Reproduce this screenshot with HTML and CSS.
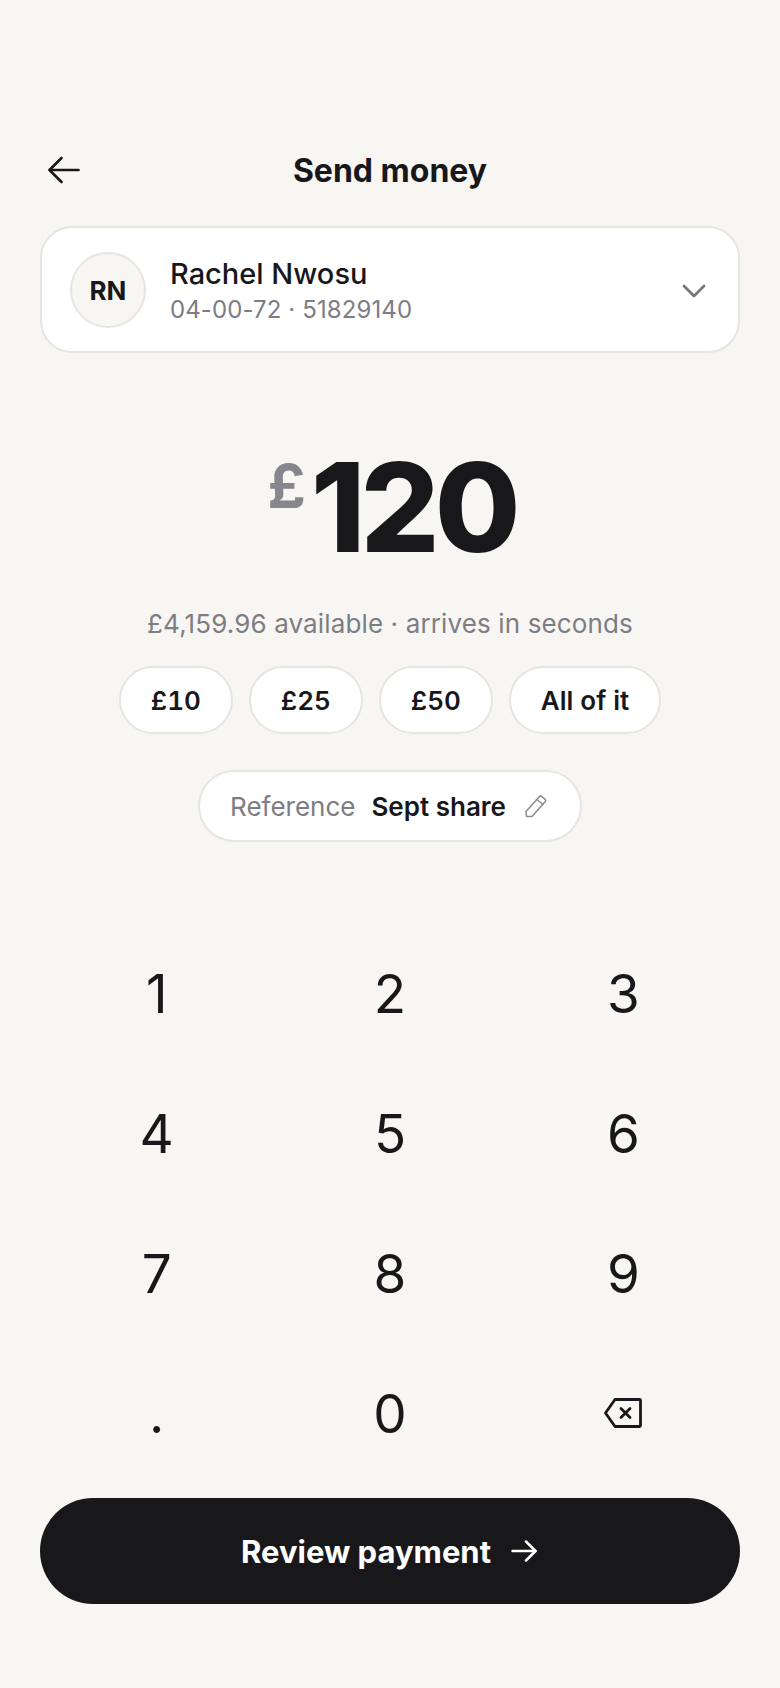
FILE: index.html
```html
<!DOCTYPE html>
<html lang="en">

<head>
    <meta charset="UTF-8">
    <meta name="viewport" content="width=device-width, initial-scale=1.0">
    <title>Send money</title>
    <link rel="stylesheet" href="styles.css">
</head>

<body>
    <div class="screen">
        <div class="header">
            <svg class="back" width="32" height="28" viewBox="0 0 32 28" fill="none" stroke="#18181b" stroke-width="2.6" stroke-linecap="round" stroke-linejoin="round">
                <path d="M30.5 14H2"/>
                <path d="M13.5 2L1.5 14l12 12"/>
            </svg>
            <div class="title">Send money</div>
        </div>

        <div class="payee">
            <div class="avatar">RN</div>
            <div class="payee-text">
                <div class="payee-name">Rachel Nwosu</div>
                <div class="payee-acc">04-00-72 · 51829140</div>
            </div>
            <svg class="chev" width="24" height="14" viewBox="0 0 24 14" fill="none" stroke="#77777c" stroke-width="2.8" stroke-linecap="round" stroke-linejoin="round">
                <path d="M2 2l10 10L22 2"/>
            </svg>
        </div>

        <div class="amount">
            <span class="currency">£</span><span class="value">120</span>
        </div>
        <div class="note">£4,159.96 available · arrives in seconds</div>

        <div class="chips">
            <div class="chip">£10</div>
            <div class="chip">£25</div>
            <div class="chip">£50</div>
            <div class="chip">All of it</div>
        </div>

        <div class="ref-row">
            <div class="ref">
                <span class="ref-label">Reference</span>
                <span class="ref-value">Sept share</span>
                <svg width="24" height="24" viewBox="0 0 24 24" fill="none" stroke="#8e8e93" stroke-width="1.6" stroke-linejoin="round">
                    <path d="M2 17.5L15.5 2.5a1.6 1.6 0 0 1 2.2-.1l3.5 3a1.6 1.6 0 0 1 .1 2.2L8 22.5H2.5z"/>
                    <path d="M13 5.5l6.5 5.5"/>
                </svg>
            </div>
        </div>

        <div class="keypad">
            <div class="key">1</div>
            <div class="key">2</div>
            <div class="key">3</div>
            <div class="key">4</div>
            <div class="key">5</div>
            <div class="key">6</div>
            <div class="key">7</div>
            <div class="key">8</div>
            <div class="key">9</div>
            <div class="key">.</div>
            <div class="key">0</div>
            <div class="key">
                <svg class="del" width="38" height="30" viewBox="0 0 38 30" fill="none" stroke="#18181b" stroke-width="2.8" stroke-linecap="round" stroke-linejoin="round">
                    <path d="M11 1.5h24.500a1 1 0 0 1 1 1v25a1 1 0 0 1-1 1H11L1.500 15z"/>
                    <path d="M17 10.500l9 9M26 10.500l-9 9"/>
                </svg>
            </div>
        </div>

        <div class="cta">
            <span>Review payment</span>
            <svg width="26" height="22" viewBox="0 0 26 22" fill="none" stroke="#fff" stroke-width="2.5" stroke-linecap="round" stroke-linejoin="round">
                <path d="M1.5 11h23"/>
                <path d="M15 1.5L24.5 11 15 20.5"/>
            </svg>
        </div>
    </div>
</body>

</html>
```

FILE: styles.css
```css
* {
    margin: 0;
    padding: 0;
    box-sizing: border-box;
}

body {
    background-color: #f7f6f3;
    color: #18181b;
    font-family: Inter, "Liberation Sans", sans-serif;
}

.screen {
    width: 780px;
    height: 1688px;
    padding: 150px 40px 0;
    display: flex;
    flex-direction: column;
}

.header {
    height: 40px;
    display: flex;
    align-items: center;
    justify-content: center;
    position: relative;
}

.back {
    position: absolute;
    left: 8px;
    top: 6px;
}

.title {
    font-size: 32px;
    font-weight: 700;
}

.payee {
    margin-top: 36px;
    height: 127px;
    background-color: #fff;
    border: 2px solid #e6e5e1;
    border-radius: 32px;
    padding: 0 32px 0 28px;
    display: flex;
    align-items: center;
}

.avatar {
    width: 76px;
    height: 76px;
    border-radius: 50%;
    background-color: #f7f6f3;
    border: 2px solid #e6e5e1;
    padding-top: 2px;
    font-size: 26px;
    font-weight: 700;
    display: flex;
    align-items: center;
    justify-content: center;
}

.payee-text {
    margin-left: 24px;
    padding-top: 2px;
    flex: 1;
}

.payee-name {
    font-size: 29px;
    font-weight: 500;
    line-height: 38px;
}

.payee-acc {
    font-size: 24px;
    letter-spacing: 0.1px;
    color: #7d7d83;
    line-height: 34px;
}

.chev {
    margin-top: 2px;
}

.amount {
    margin-top: 88px;
    height: 132px;
    display: flex;
    justify-content: center;
    align-items: flex-start;
    padding-left: 3px;
}

.currency {
    font-size: 60px;
    font-weight: 700;
    color: #86868c;
    line-height: 72px;
    margin-top: 9px;
    margin-right: 5px;
}

.value {
    font-size: 124px;
    font-weight: 800;
    line-height: 132px;
    letter-spacing: -5px;
}

.note {
    margin-top: 34px;
    text-align: center;
    font-size: 26px;
    letter-spacing: 0.13px;
    line-height: 34px;
    color: #7d7d83;
}

.chips {
    margin-top: 25px;
    display: flex;
    justify-content: center;
    gap: 16px;
}

.chip {
    height: 68px;
    padding: 0 30px;
    background-color: #fff;
    border: 2px solid #e6e5e1;
    border-radius: 34px;
    font-size: 26px;
    font-weight: 600;
    font-variant-numeric: tabular-nums;
    display: flex;
    align-items: center;
}

.ref-row {
    margin-top: 36px;
    display: flex;
    justify-content: center;
}

.ref {
    height: 72px;
    padding: 0 32px 0 30px;
    background-color: #fff;
    border: 2px solid #e6e5e1;
    border-radius: 36px;
    display: flex;
    align-items: center;
    font-size: 26px;
}

.ref-label {
    color: #7d7d83;
}

.ref-value {
    margin-left: 16px;
    margin-right: 18px;
    font-weight: 600;
}

.keypad {
    margin-top: 82px;
    display: grid;
    grid-template-columns: repeat(3, 1fr);
    grid-auto-rows: 140px;
}

.key {
    font-size: 53px;
    font-weight: 400;
    display: flex;
    align-items: center;
    justify-content: center;
}

.del {
    margin-top: -2px;
}

.cta {
    margin-top: 14px;
    height: 106px;
    background-color: #18181b;
    border-radius: 53px;
    padding-right: 2px;
    color: #fff;
    font-size: 31px;
    font-weight: 700;
    display: flex;
    align-items: center;
    justify-content: center;
    gap: 20px;
}
```
